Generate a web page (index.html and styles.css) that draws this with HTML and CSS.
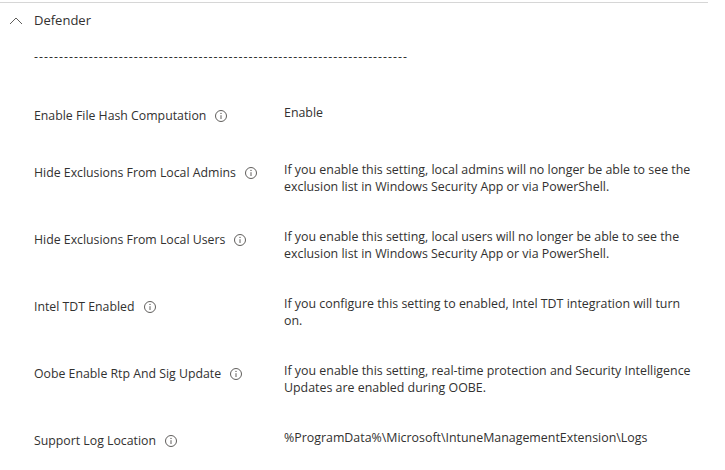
FILE: index.html
```html
<!DOCTYPE html>
<html lang="en">
<head>
    <meta charset="UTF-8">
    <meta name="viewport" content="width=device-width, initial-scale=1.0">
    <title>Defender</title>
    <link rel="stylesheet" href="styles.css">
</head>
<body>
    <div class="panel">
        <!-- Section header -->
        <div class="section-header">
            <svg class="chevron" width="16" height="16" viewBox="0 0 16 16"><path d="M2 12 8 6 14 12" fill="none" stroke="#605e5c" stroke-width="1"/></svg>
            <span>Defender</span>
        </div>
        <div class="divider-text">---------------------------------------------------------------------------</div>

        <!-- Settings -->
        <div class="settings">
            <div class="setting-row first">
                <div class="setting-label">Enable File Hash Computation
                    <svg class="info" viewBox="0 0 12 12"><use href="#info-icon"/></svg>
                </div>
                <div class="setting-value">Enable</div>
            </div>
            <div class="setting-row">
                <div class="setting-label">Hide Exclusions From Local Admins
                    <svg class="info" viewBox="0 0 12 12"><use href="#info-icon"/></svg>
                </div>
                <div class="setting-value">If you enable this setting, local admins will no longer be able to see the exclusion list in Windows Security App or via PowerShell.</div>
            </div>
            <div class="setting-row">
                <div class="setting-label">Hide Exclusions From Local Users
                    <svg class="info" viewBox="0 0 12 12"><use href="#info-icon"/></svg>
                </div>
                <div class="setting-value">If you enable this setting, local users will no longer be able to see the exclusion list in Windows Security App or via PowerShell.</div>
            </div>
            <div class="setting-row">
                <div class="setting-label">Intel TDT Enabled
                    <svg class="info" viewBox="0 0 12 12"><use href="#info-icon"/></svg>
                </div>
                <div class="setting-value">If you configure this setting to enabled, Intel TDT integration will turn on.</div>
            </div>
            <div class="setting-row">
                <div class="setting-label">Oobe Enable Rtp And Sig Update
                    <svg class="info" viewBox="0 0 12 12"><use href="#info-icon"/></svg>
                </div>
                <div class="setting-value">If you enable this setting, real-time protection and Security Intelligence Updates are enabled during OOBE.</div>
            </div>
            <div class="setting-row">
                <div class="setting-label">Support Log Location
                    <svg class="info" viewBox="0 0 12 12"><use href="#info-icon"/></svg>
                </div>
                <div class="setting-value">%ProgramData%\Microsoft\IntuneManagementExtension\Logs</div>
            </div>
        </div>
    </div>

    <svg class="icon-defs" width="0" height="0">
        <symbol id="info-icon" viewBox="0 0 12 12">
            <circle cx="6" cy="6" r="5.5" fill="none" stroke="#605e5c" stroke-width="1"/>
            <path d="M6 5.2V9" stroke="#605e5c" stroke-width="1" fill="none"/>
            <circle cx="6" cy="3.4" r="0.7" fill="#605e5c"/>
        </symbol>
    </svg>
</body>
</html>
```

FILE: styles.css
```css
body {
    font-family: "Open Sans", "Noto Sans", sans-serif;
    font-size: 12.4px;
    color: #323130;
    margin: 0;
    padding: 0;
    background-color: #fff;
    overflow: hidden;
}
.panel {
    width: 708px;
    margin-top: 2px;
    border-top: 1px solid #d6d6d6;
}
.section-header {
    display: flex;
    align-items: center;
    height: 34px;
    padding-left: 8px;
    font-size: 13px;
}
.chevron {
    margin-right: 10px;
}
.divider-text {
    margin-top: 11px;
    padding-left: 34px;
    line-height: 17px;
    letter-spacing: 1px;
    white-space: nowrap;
}
.settings {
    margin-top: 39px;
    padding-left: 34px;
}
.setting-row {
    display: grid;
    grid-template-columns: 250px 412px;
    margin-bottom: 33px;
}
.setting-row.first {
    min-height: 24px;
}
.setting-label {
    display: flex;
    align-items: center;
    gap: 9px;
    height: 17px;
    margin-top: 3px;
    font-size: 12.3px;
    line-height: 17px;
}
.setting-value {
    line-height: 17px;
}
.info {
    width: 12px;
    height: 12px;
    flex: none;
}
.icon-defs {
    position: absolute;
}
```
